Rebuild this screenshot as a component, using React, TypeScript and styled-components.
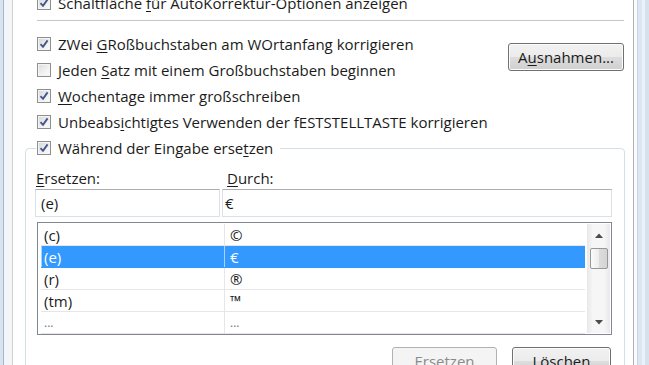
import React from "react";
import styled, { createGlobalStyle } from "styled-components";

const Global = createGlobalStyle`
  html, body { margin: 0; padding: 0; background: #fff; }
  body {
    width: 649px; height: 365px; overflow: hidden;
    font-family: "Open Sans", "Noto Sans", sans-serif;
    font-size: 15px; color: #1b1b1b;
  }
`;

const Window = styled.div`
  display: flex;
  width: 649px;
  height: 365px;
  overflow: hidden;
  background: #fff;
`;

const LeftEdge = styled.div`
  flex: 0 0 13px;
  background: linear-gradient(to right, #d9e3ef 0 3px, #a7b5c8 3px 4px, #f3f5f8 4px 12px, #cfd3d8 12px 13px);
`;

const RightEdge = styled.div`
  flex: 0 0 16px;
  background: linear-gradient(to right, #b1b1b1 0 1px, #fbfbfb 1px 4px, #c9d5e4 4px 5px, #dde7f3 5px 9px, #edf2f8 9px 12px, #d6e1ee 12px 16px);
`;

const Client = styled.div`
  flex: 1;
  min-width: 0;
  display: flex;
  flex-direction: column;
  margin-top: -10px;
`;

const TopSection = styled.div`
  padding: 0 9px 0 24px;
  display: flex;
  flex-direction: column;
`;

const CheckRow = styled.label`
  display: flex;
  align-items: center;
  gap: 7px;
  height: 26px;
  white-space: nowrap;
`;

const OptionRow = styled(CheckRow)`
  grid-column: 1;
`;

const Key = styled.span`
  text-decoration: underline;
  text-underline-offset: 2px;
`;

const Separator = styled.div`
  border-top: 1px solid #c6c6c6;
  margin: 4px 0 10px;
`;

const OptionsGrid = styled.div`
  display: grid;
  grid-template-columns: 1fr auto;
  grid-auto-rows: 26px;
`;

const SideButtonCell = styled.div`
  grid-column: 2;
  grid-row: 1 / span 2;
  align-self: center;
`;

const Button = styled.div<{ $w: number; $disabled?: boolean }>`
  width: ${(p) => p.$w}px;
  height: 28px;
  box-sizing: border-box;
  display: flex;
  align-items: center;
  justify-content: center;
  border: 1px solid ${(p) => (p.$disabled ? "#adb2b5" : "#707070")};
  border-radius: 3px;
  color: ${(p) => (p.$disabled ? "#8b8b8b" : "#1b1b1b")};
  background: ${(p) =>
    p.$disabled
      ? "#f4f4f4"
      : "linear-gradient(to bottom, #f2f2f2 0%, #ebebeb 50%, #dddddd 50%, #cfcfcf 100%)"};
  box-shadow: inset 0 0 0 1px ${(p) => (p.$disabled ? "#f4f4f4" : "#fcfcfc")};
`;

const GroupBox = styled.fieldset`
  margin: 0 8px 0 12px;
  border: 1px solid #d5dfe5;
  border-radius: 4px;
  padding: 0 12px 0 9px;
  min-width: 0;
  flex: 1;
`;

const Legend = styled.legend`
  padding: 0 7px 0 1px;
  margin-left: 1px;
`;

const FieldGrid = styled.div`
  display: grid;
  grid-template-columns: 185px 390px;
  column-gap: 2px;
`;

const FieldLabel = styled.div<{ $pad: number }>`
  height: 20px;
  margin-top: 7px;
  display: flex;
  align-items: center;
  padding-left: ${(p) => p.$pad}px;
`;

const TextBox = styled.div<{ $pad: number }>`
  height: 28px;
  margin-top: 1px;
  box-sizing: border-box;
  border: 1px solid #dbdfe6;
  border-top-color: #abadb3;
  display: flex;
  align-items: center;
  padding-left: ${(p) => p.$pad}px;
  background: #fff;
`;

const ListBox = styled.div`
  margin: 5px 0 0 2px;
  height: 113px;
  box-sizing: border-box;
  border: 1px solid #828790;
  padding: 1px 1px 0 3px;
  display: flex;
  background: #fff;
`;

const Rows = styled.div`
  flex: 1;
  display: flex;
  flex-direction: column;
`;

const Row = styled.div<{ $sel?: boolean }>`
  height: 22px;
  box-sizing: border-box;
  display: grid;
  grid-template-columns: 183px 1fr;
  border-bottom: 1px solid ${(p) => (p.$sel ? "#3399ff" : "#e6e6e6")};
  background: ${(p) => (p.$sel ? "#3399ff" : "transparent")};
  color: ${(p) => (p.$sel ? "#fff" : "#1b1b1b")};
`;

const Cell = styled.div<{ $first?: boolean; $sel?: boolean; $dim?: boolean }>`
  display: flex;
  align-items: center;
  white-space: nowrap;
  padding-left: ${(p) => (p.$first ? 2 : 5)}px;
  border-left: 1px solid
    ${(p) => (p.$sel ? "#a9d3ff" : p.$first ? "transparent" : "#e6e6e6")};
  color: ${(p) => (p.$dim ? "#777" : "inherit")};
  font-size: ${(p) => (p.$dim ? "12px" : "inherit")};
`;

const ScrollBar = styled.div`
  flex: 0 0 23px;
  margin-left: 2px;
  margin-bottom: 1px;
  display: flex;
  flex-direction: column;
  background: linear-gradient(to right, #e8e8e8, #f6f6f6 25%, #f6f6f6 75%, #e8e8e8);
`;

const ArrowBox = styled.div`
  height: 22px;
  display: flex;
  align-items: center;
  justify-content: center;
`;

const Thumb = styled.div`
  height: 21px;
  margin: 2px 2px 0 3px;
  box-sizing: border-box;
  border: 1px solid #979797;
  border-radius: 2px;
  background: linear-gradient(to right, #fbfbfb, #ececec 50%, #dcdcdc 51%, #d4d4d4);
`;

const Track = styled.div`
  flex: 1;
`;

const ButtonRow = styled.div`
  display: flex;
  justify-content: flex-end;
  gap: 15px;
  margin: 12px 1px 0 0;
`;

const BoxOuter = styled.span<{ $checked: boolean }>`
  flex: 0 0 14px;
  width: 14px;
  height: 14px;
  box-sizing: border-box;
  border: 1px solid #8e8f8f;
  background: ${(p) =>
    p.$checked
      ? "linear-gradient(135deg, #d4d4d4 0%, #f0f0f0 60%, #fbfbfb 100%)"
      : "linear-gradient(135deg, #dcdcdc 0%, #f2f2f2 60%, #fcfcfc 100%)"};
  box-shadow: inset 0 0 0 1px #f4f4f4;
  display: flex;
  align-items: center;
  justify-content: center;
`;

const CheckBox: React.FC<{ checked?: boolean }> = ({ checked = true }) => (
  <BoxOuter $checked={checked}>
    {checked && (
      <svg width="10" height="10" viewBox="0 0 10 10">
        <path d="M1.5 5.2 L4 7.8 L8.6 1.4" fill="none" stroke="#44578a" strokeWidth="1.9" />
      </svg>
    )}
  </BoxOuter>
);

const UpArrow = () => (
  <svg width="8" height="5" viewBox="0 0 8 5">
    <path d="M0 5 L4 0.5 L8 5 Z" fill="#4a4a4a" />
  </svg>
);
const DownArrow = () => (
  <svg width="8" height="5" viewBox="0 0 8 5">
    <path d="M0 0 L4 4.5 L8 0 Z" fill="#4a4a4a" />
  </svg>
);

const entries: { from: string; to: string; sel?: boolean; dim?: boolean }[] = [
  { from: "(c)", to: "©" },
  { from: "(e)", to: "€", sel: true },
  { from: "(r)", to: "®" },
  { from: "(tm)", to: "™" },
  { from: "...", to: "...", dim: true },
];

export default function App() {
  return (
    <>
      <Global />
      <Window>
        <LeftEdge />
        <Client>
          <TopSection>
            <CheckRow>
              <CheckBox />
              <span>
                Schaltfläche <Key>f</Key>ür AutoKorrektur-Optionen anzeigen
              </span>
            </CheckRow>
            <Separator />
            <OptionsGrid>
              <OptionRow>
                <CheckBox />
                <span>
                  ZWei <Key>G</Key>Roßbuchstaben am WOrtanfang korrigieren
                </span>
              </OptionRow>
              <SideButtonCell>
                <Button $w={116}>
                  A<Key>u</Key>snahmen...
                </Button>
              </SideButtonCell>
              <OptionRow>
                <CheckBox checked={false} />
                <span>
                  Jeden <Key>S</Key>atz mit einem Großbuchstaben beginnen
                </span>
              </OptionRow>
              <OptionRow>
                <CheckBox />
                <span>
                  <Key>W</Key>ochentage immer großschreiben
                </span>
              </OptionRow>
              <OptionRow>
                <CheckBox />
                <span>
                  Unbeabs<Key>i</Key>chtigtes Verwenden der fESTSTELLTASTE korrigieren
                </span>
              </OptionRow>
            </OptionsGrid>
          </TopSection>
          <GroupBox>
            <Legend>
              <CheckRow>
                <CheckBox />
                <span>
                  Während der Eingabe erse<Key>t</Key>zen
                </span>
              </CheckRow>
            </Legend>
            <FieldGrid>
              <FieldLabel $pad={1}>
                <span>
                  <Key>E</Key>rsetzen:
                </span>
              </FieldLabel>
              <FieldLabel $pad={5}>
                <span>
                  <Key>D</Key>urch:
                </span>
              </FieldLabel>
              <TextBox $pad={5}>(e)</TextBox>
              <TextBox $pad={2}>€</TextBox>
            </FieldGrid>
            <ListBox>
              <Rows>
                {entries.map((e) => (
                  <Row key={e.from + e.to} $sel={e.sel}>
                    <Cell $first $sel={e.sel} $dim={e.dim}>
                      {e.from}
                    </Cell>
                    <Cell $sel={e.sel} $dim={e.dim}>
                      {e.to}
                    </Cell>
                  </Row>
                ))}
              </Rows>
              <ScrollBar>
                <ArrowBox>
                  <UpArrow />
                </ArrowBox>
                <Thumb />
                <Track />
                <ArrowBox>
                  <DownArrow />
                </ArrowBox>
              </ScrollBar>
            </ListBox>
            <ButtonRow>
              <Button $w={105} $disabled>
                Ersetzen
              </Button>
              <Button $w={99}>Löschen</Button>
            </ButtonRow>
          </GroupBox>
        </Client>
        <RightEdge />
      </Window>
    </>
  );
}
